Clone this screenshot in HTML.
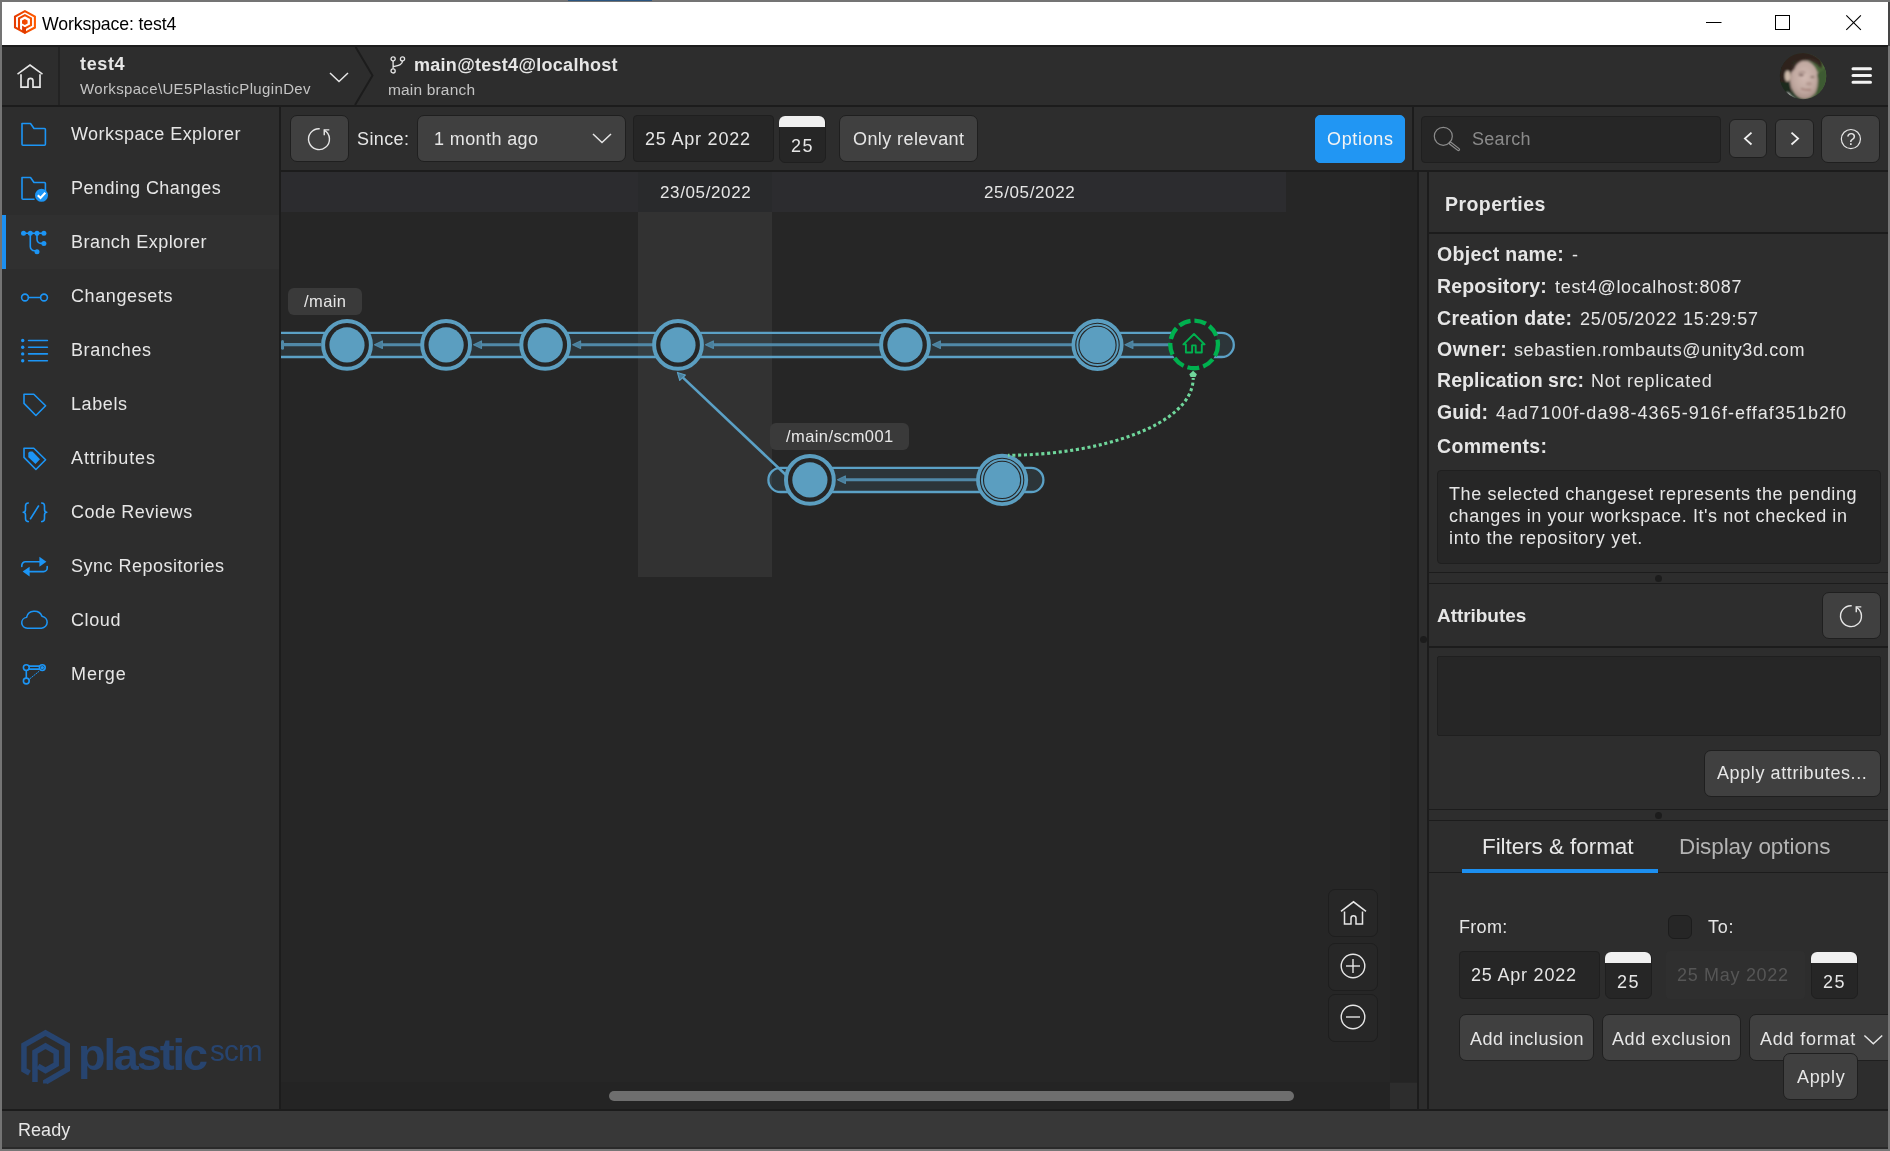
<!DOCTYPE html>
<html><head><meta charset="utf-8"><title>Workspace: test4</title>
<style>
*{box-sizing:border-box;margin:0;padding:0}
html,body{width:1890px;height:1151px;overflow:hidden;background:#777;font-family:"Liberation Sans",sans-serif;color:#e6e6e6}
.abs{position:absolute}
.txt{position:absolute;white-space:nowrap;line-height:1;will-change:transform}
#win{position:absolute;left:0;top:0;width:1890px;height:1151px;overflow:hidden}
</style></head><body>
<div id="win">
<div class="abs" style="left:0px;top:0px;width:1890px;height:1151px;background:#747474;"></div>
<div class="abs" style="left:1888px;top:0px;width:2px;height:1151px;background:#767676;"></div>
<div class="abs" style="left:2px;top:2px;width:1886px;height:1147px;background:#2d2d2d;"></div>
<div class="abs" style="left:2px;top:2px;width:1886px;height:43px;background:#ffffff;"></div>
<div class="txt" style="left:42.3px;top:16.00px;font-size:17.7px;color:#000;letter-spacing:-0.128px;">Workspace: test4</div>
<svg class="abs" style="left:1700px;top:8px;" width="170" height="30" viewBox="1700 8 170 30" fill="none"><path d="M1706 22.5h15.500" stroke="#000" stroke-width="1"/><rect x="1775.500" y="15.500" width="14" height="14" stroke="#000" stroke-width="1"/><path d="M1846.300 15.300l14.600 14.600M1860.900 15.300l-14.600 14.600" stroke="#000" stroke-width="1.100"/></svg>
<svg class="abs" style="left:10px;top:6px;" width="30" height="32" viewBox="10 6 30 32" fill="none"><defs><linearGradient id="lg" x1="14" y1="0" x2="36" y2="0" gradientUnits="userSpaceOnUse"><stop offset="0" stop-color="#e43a00"/><stop offset="1" stop-color="#ff5a00"/></linearGradient></defs>
<g stroke="url(#lg)" stroke-width="2.100" stroke-linejoin="miter" fill="none">
<path d="M24.900 11.100 L34.900 16.600 V27.500 L24.900 32.900 L15 27.500 V16.600 Z"/>
<path d="M19 29.600 V18.400 L24.900 15.100 L31 18.400 V25.100 L24.900 28.400"/></g>
<path d="M22.100 25.600 L24.900 27.200 L26 27.500 V33 L24.900 33.700 L22.100 32.100Z" fill="#e03a00"/>
<path d="M24.800 18.900 L27.600 20.450 V23.550 L24.800 25.100 L22 23.550 V20.450Z" fill="url(#lg)"/></svg>
<div class="abs" style="left:2px;top:45px;width:1886px;height:2px;background:#1c1c1c;"></div>
<div class="abs" style="left:2px;top:105px;width:1886px;height:2px;background:#1c1c1c;"></div>
<div class="abs" style="left:58px;top:47px;width:2px;height:58px;background:#232323;"></div>
<svg class="abs" style="left:15px;top:60px;" width="32" height="32" viewBox="0 0 32 32" fill="none"><path d="M2.500 14.100 L15 5.100 L27.500 14.100" stroke="#e6e6e6" stroke-width="1.600"/><path d="M6 14.300V27.200h7V20.800a2.500 2.500 0 0 1 5 0V27.200h7V14.300" stroke="#e6e6e6" stroke-width="1.700"/></svg>
<div class="txt" style="left:80px;top:55.00px;font-size:18px;color:#e6e6e6;letter-spacing:0.645px;font-weight:700;">test4</div>
<div class="txt" style="left:80px;top:81.00px;font-size:15px;color:#c4c4c4;letter-spacing:0.352px;">Workspace\UE5PlasticPluginDev</div>
<svg class="abs" style="left:327.2px;top:68.8px;" width="24" height="16" viewBox="0 0 24 16" fill="none"><path d="M3 4l9 8.500 9-8.500" stroke="#e6e6e6" stroke-width="1.500"/></svg>
<svg class="abs" style="left:352px;top:47px;" width="26" height="58" viewBox="0 0 26 58" fill="none"><path d="M3.600 0 L20.500 28.500 L3 58" stroke="#1c1c1c" stroke-width="2"/></svg>
<svg class="abs" style="left:387px;top:54px;" width="20" height="22" viewBox="0 0 20 22" fill="none"><g stroke="#e6e6e6" stroke-width="1.300"><circle cx="6.100" cy="4.900" r="2.100"/><circle cx="15.500" cy="4.900" r="2.100"/><circle cx="6.100" cy="16.900" r="2.100"/><path d="M6.100 7v7.800M15.500 7c0 3.500-3 4.300-9.400 5.600"/></g></svg>
<div class="txt" style="left:414.3px;top:56.00px;font-size:18px;color:#e6e6e6;letter-spacing:0.282px;font-weight:700;">main@test4@localhost</div>
<div class="txt" style="left:388.3px;top:82.00px;font-size:15.5px;color:#c4c4c4;letter-spacing:0.17px;">main branch</div>
<svg class="abs" style="left:1779px;top:52px" width="48" height="48" viewBox="0 0 48 48">
<defs><clipPath id="av"><circle cx="24" cy="24.100" r="23.200"/></clipPath>
<radialGradient id="face" cx="0.500" cy="0.420" r="0.600"><stop offset="0" stop-color="#d2bab2"/><stop offset="0.650" stop-color="#c0a8a0"/><stop offset="1" stop-color="#a38b82"/></radialGradient>
<linearGradient id="avbg" x1="0" y1="0" x2="1" y2="0"><stop offset="0" stop-color="#16231a"/><stop offset="0.550" stop-color="#2c4228"/><stop offset="1" stop-color="#587a40"/></linearGradient>
<filter id="bl" x="-20%" y="-20%" width="140%" height="140%"><feGaussianBlur stdDeviation="0.900"/></filter></defs>
<g clip-path="url(#av)"><rect width="48" height="48" fill="url(#avbg)"/>
<g filter="url(#bl)">
<path d="M0 26 L2 10 L13 0 L28 -1 L42 6 L43 17 L38 12 L30 7 L14 10 L12 41 L2 40Z" fill="#2e241d"/><path d="M0 30 L12 30 L11 44 L0 40Z" fill="#1b2a1d"/>
<ellipse cx="25.500" cy="28" rx="14.600" ry="19.500" fill="url(#face)"/>
<path d="M11.500 21 Q13 10 20 8 Q30 4.500 39 9 L41 14 Q34 8 25 8.500 Q18 9.500 15.500 17Z" fill="#3a2c25"/>
<ellipse cx="8.600" cy="24" rx="2.800" ry="5.600" fill="#cdb9a9"/>
<path d="M38 22 Q41 34 34 47 L48 48 L48 14Z" fill="#3d5a30"/>
<ellipse cx="22.200" cy="23.100" rx="2.800" ry="1.100" fill="#7a5f5c"/><ellipse cx="33.400" cy="24.900" rx="2.300" ry="1" fill="#8a7069"/>
<path d="M19.500 20.800 q3.500 -1.600 7 -.3" stroke="#8f7670" stroke-width="1" fill="none"/>
<ellipse cx="30" cy="31.800" rx="3" ry="1.700" fill="#b39890"/>
<path d="M22 36.600 Q27 38.300 32 37.700" stroke="#9c746c" stroke-width="1.500" fill="none"/>
<path d="M8 40 L17 47.500 L9 47Z" fill="#e4e4e4"/>
</g></g></svg>
<svg class="abs" style="left:1848px;top:62px;" width="28" height="28" viewBox="1848 62 28 28" fill="none"><path d="M1853 68.800h17.500M1853 75.600h17.500M1853 82.300h17.500" stroke="#f2f2f2" stroke-width="3" stroke-linecap="round"/></svg>
<div class="abs" style="left:279px;top:107px;width:2px;height:1004px;background:#1c1c1c;"></div>
<div class="abs" style="left:2px;top:214.5px;width:277px;height:54.0px;background:#303030;"></div>
<div class="abs" style="left:2px;top:214.5px;width:4px;height:54.0px;background:#1c8ff0;"></div>
<div class="txt" style="left:71px;top:125.00px;font-size:18px;color:#e6e6e6;letter-spacing:0.451px;">Workspace Explorer</div>
<div class="txt" style="left:71px;top:179.00px;font-size:18px;color:#e6e6e6;letter-spacing:0.478px;">Pending Changes</div>
<div class="txt" style="left:71px;top:233.00px;font-size:18px;color:#e6e6e6;letter-spacing:0.46px;">Branch Explorer</div>
<div class="txt" style="left:71px;top:287.00px;font-size:18px;color:#e6e6e6;letter-spacing:0.615px;">Changesets</div>
<div class="txt" style="left:71px;top:341.00px;font-size:18px;color:#e6e6e6;letter-spacing:0.565px;">Branches</div>
<div class="txt" style="left:71px;top:395.00px;font-size:18px;color:#e6e6e6;letter-spacing:0.592px;">Labels</div>
<div class="txt" style="left:71px;top:449.00px;font-size:18px;color:#e6e6e6;letter-spacing:0.874px;">Attributes</div>
<div class="txt" style="left:71px;top:503.00px;font-size:18px;color:#e6e6e6;letter-spacing:0.468px;">Code Reviews</div>
<div class="txt" style="left:71px;top:557.00px;font-size:18px;color:#e6e6e6;letter-spacing:0.496px;">Sync Repositories</div>
<div class="txt" style="left:71px;top:611.00px;font-size:18px;color:#e6e6e6;letter-spacing:0.617px;">Cloud</div>
<div class="txt" style="left:71px;top:665.00px;font-size:18px;color:#e6e6e6;letter-spacing:0.92px;">Merge</div>
<svg class="abs" style="left:18px;top:118px;" width="32" height="32" viewBox="0 0 32 32" fill="none"><path stroke="#1c95f5" stroke-width="1.600" fill="none" stroke-linejoin="round" stroke-linecap="round" d="M4 5.500 h8.500 l3.500 5 h10.400 a1 1 0 0 1 1 1 V26.300 a1 1 0 0 1 -1 1 H5 a1 1 0 0 1 -1 -1 Z"/></svg>
<svg class="abs" style="left:18px;top:172px;" width="32" height="32" viewBox="0 0 32 32" fill="none"><path stroke="#1c95f5" stroke-width="1.600" fill="none" stroke-linejoin="round" stroke-linecap="round" d="M4 5.500 h8.500 l3.500 5 h10.400 a1 1 0 0 1 1 1 V19.500 M16 27.300 H5 a1 1 0 0 1 -1 -1 V5.500"/><circle cx="23.500" cy="23.300" r="6.500" fill="#1c95f5"/><path d="M19.800 23.300l2.700 2.700 4.800-5.200" stroke="#fff" stroke-width="2.100" fill="none"/></svg>
<svg class="abs" style="left:18px;top:226px;" width="32" height="32" viewBox="0 0 32 32" fill="none"><g stroke="#1c95f5" stroke-width="1.600" fill="none" stroke-linejoin="round" stroke-linecap="round" stroke-width="1.600"><path d="M5.500 7.300h20.400M12.300 7.300v13.200a4.200 4.200 0 0 0 4.200 4.300h2.500M19 7.300v6a4 4 0 0 0 4 4.100h2.900"/></g><g fill="#1c95f5"><circle cx="5.500" cy="7.300" r="2.500"/><circle cx="12.300" cy="7.300" r="2.500"/><circle cx="19" cy="7.300" r="2.500"/><circle cx="25.900" cy="7.300" r="2.500"/><circle cx="25.900" cy="17.400" r="2.500"/><circle cx="19" cy="25.800" r="2.500"/></g></svg>
<svg class="abs" style="left:18px;top:280px;" width="32" height="32" viewBox="0 0 32 32" fill="none"><g stroke="#1c95f5" stroke-width="1.600" fill="none" stroke-linejoin="round" stroke-linecap="round" stroke-width="1.900"><circle cx="7" cy="17.500" r="3.400"/><circle cx="26" cy="17.500" r="3.400"/><path d="M10.400 17.500h12.200"/></g></svg>
<svg class="abs" style="left:18px;top:334px;" width="32" height="32" viewBox="0 0 32 32" fill="none"><g stroke="#1c95f5" stroke-width="1.600" fill="none" stroke-linejoin="round" stroke-linecap="round" stroke-width="1.600"><path d="M10.600 6.500h18.800M10.600 13.300h18.800M10.600 19.900h18.800M10.600 26.700h18.800"/></g><g fill="#1c95f5"><circle cx="4.700" cy="6.500" r="1.700"/><circle cx="4.700" cy="13.300" r="1.700"/><circle cx="4.700" cy="19.900" r="1.700"/><circle cx="4.700" cy="26.700" r="1.700"/></g></svg>
<svg class="abs" style="left:18px;top:388px;" width="32" height="32" viewBox="0 0 32 32" fill="none"><path stroke="#1c95f5" stroke-width="1.600" fill="none" stroke-linejoin="round" stroke-linecap="round" stroke-width="1.900" d="M6 6.200 H15.800 L27.600 17.700 L17.900 27.500 L6 15.400 Z"/></svg>
<svg class="abs" style="left:18px;top:442px;" width="32" height="32" viewBox="0 0 32 32" fill="none"><path stroke="#1c95f5" stroke-width="1.600" fill="none" stroke-linejoin="round" stroke-linecap="round" stroke-width="1.900" d="M6 6.200 H15.800 L27.600 17.700 L17.900 27.500 L6 15.400 Z"/><path d="M10.300 11.500 a2 2 0 0 1 2-2 h2.200 L22 17.300 L17.500 22 L10.300 15.300Z" fill="#1c95f5"/></svg>
<svg class="abs" style="left:18px;top:496px;" width="32" height="32" viewBox="0 0 32 32" fill="none"><g stroke="#1c95f5" stroke-width="1.600" fill="none" stroke-linejoin="round" stroke-linecap="round" stroke-width="1.500"><path d="M10.300 7c-2.300 0-2.800 1.200-2.800 3v3.600c0 1.800-.9 2.700-2.300 2.700 1.400 0 2.300.9 2.300 2.700v3.600c0 1.800.5 3 2.800 3"/><path d="M23.700 7c2.300 0 2.800 1.200 2.800 3v3.600c0 1.800.9 2.700 2.300 2.700-1.400 0-2.300.9-2.300 2.700v3.600c0 1.800-.5 3-2.800 3"/><path d="M20.500 10l-8 12.700"/></g></svg>
<svg class="abs" style="left:18px;top:550px;" width="32" height="32" viewBox="0 0 32 32" fill="none"><g stroke="#1c95f5" stroke-width="1.600" fill="none" stroke-linejoin="round" stroke-linecap="round" stroke-width="1.700"><path d="M3.800 16.400v-1a3.600 3.600 0 0 1 3.600-3.600h14.500"/><path d="M29.200 16.600v1.400a3.600 3.600 0 0 1-3.600 3.600H11.500"/></g><path d="M21.400 6.800l7 5-7 5z" fill="#1c95f5"/><path d="M11.600 16.800l-7 4.800 7 4.800z" fill="#1c95f5"/></svg>
<svg class="abs" style="left:18px;top:604px;" width="32" height="32" viewBox="0 0 32 32" fill="none"><path stroke="#1c95f5" stroke-width="1.600" fill="none" stroke-linejoin="round" stroke-linecap="round" transform="matrix(0.975 0 0 0.914 0.080 0.930)" d="M9.500 25.500a6 6 0 0 1-.8-11.900 8.200 8.200 0 0 1 15.800-1.300 6.700 6.700 0 0 1-.5 13.200z"/></svg>
<svg class="abs" style="left:18px;top:658px;" width="32" height="32" viewBox="0 0 32 32" fill="none"><g stroke="#1c95f5" stroke-width="1.600" fill="none" stroke-linejoin="round" stroke-linecap="round" stroke-width="1.300"><circle cx="8.300" cy="9.600" r="2.900"/><circle cx="8.300" cy="23" r="2.900"/><circle cx="24.300" cy="9.600" r="2.900"/><circle cx="24.300" cy="9.600" r="0.900"/><path d="M11.200 8.100h10.200M11.200 11.100h10.200M8.300 12.500v7.600"/><path d="M11.800 20.800l9-7.300" stroke-width="1" stroke-dasharray="1.200 1.400"/></g></svg>
<svg class="abs" style="left:16px;top:1024px;" width="60" height="68" viewBox="16 1024 60 68" fill="none"><g stroke="#27446f" stroke-width="5.500" stroke-linejoin="miter" fill="none"><path d="M45.800 1083.500 V1081.900 L67.250 1069.500 V1045 L45.500 1032.800 L23.950 1045 V1070 L29.500 1073.200"/><path d="M34.950 1082 V1052 L45.500 1045.900 L56.200 1052 V1064.400 L45.500 1070.500 L38 1066.200"/></g></svg>
<div class="txt" style="left:78px;top:1032.00px;font-size:45px;color:#27446f;letter-spacing:-2.093px;font-weight:700;">plastic</div>
<div class="txt" style="left:209.5px;top:1036.00px;font-size:29.5px;color:#27446f;letter-spacing:-0.787px;">scm</div>
<div class="abs" style="left:281px;top:170px;width:1607px;height:2px;background:#1c1c1c;"></div>
<div class="abs" style="left:289.5px;top:115.3px;width:59.0px;height:47.2px;background:#404040;border:1px solid #1f1f1f;border-radius:7px;"></div>
<svg class="abs" style="left:300px;top:121px;" width="38" height="36" viewBox="300 121 38 36" fill="none"><g stroke="#e6e6e6" stroke-width="1.400" fill="none"><path d="M319.70 128.72 A10.450 10.450 0 1 0 324.20 130.08"/><path d="M329.30 129.85 H324.25 V135.35" stroke-linejoin="miter"/></g></svg>
<div class="txt" style="left:356.5px;top:130.00px;font-size:18px;color:#e6e6e6;letter-spacing:0.394px;">Since:</div>
<div class="abs" style="left:416.5px;top:115.2px;width:209.0px;height:47.3px;background:#404040;border:1px solid #1f1f1f;border-radius:7px;"></div>
<div class="txt" style="left:434.3px;top:130.00px;font-size:18px;color:#e6e6e6;letter-spacing:0.393px;">1 month ago</div>
<svg class="abs" style="left:590px;top:130px;" width="24" height="16" viewBox="0 0 24 16" fill="none"><path d="M3 4l9 8.500 9-8.500" stroke="#e6e6e6" stroke-width="1.500"/></svg>
<div class="abs" style="left:632.5px;top:115.2px;width:141.0px;height:47.3px;background:#262626;border:1px solid #1f1f1f;border-radius:4px;"></div>
<div class="txt" style="left:644.7px;top:130.00px;font-size:18px;color:#e6e6e6;letter-spacing:0.792px;">25 Apr 2022</div>
<div class="abs" style="left:778.5px;top:115.5px;width:47.0px;height:47.0px;background:#262626;border:1px solid #1f1f1f;border-radius:6px;"></div>
<div class="abs" style="left:779.2px;top:115.8px;width:45.59999999999991px;height:11.400000000000006px;background:#f0f0f0;border-radius:6px 6px 0 0;"></div>
<div class="txt" style="left:791.45px;top:137.00px;font-size:18px;color:#e6e6e6;letter-spacing:1.478px;">25</div>
<div class="abs" style="left:838.5px;top:115.2px;width:139.0px;height:47.3px;background:#404040;border:1px solid #1f1f1f;border-radius:7px;"></div>
<div class="txt" style="left:852.8px;top:130.00px;font-size:18px;color:#e6e6e6;letter-spacing:0.413px;">Only relevant</div>
<div class="abs" style="left:1315px;top:115px;width:90px;height:48px;background:#2196f3;border:1px solid #2196f3;border-radius:5px;"></div>
<div class="txt" style="left:1327.0px;top:130.00px;font-size:18px;color:#f4f4f4;letter-spacing:0.661px;">Options</div>
<div class="abs" style="left:1412px;top:107px;width:2px;height:63px;background:#1c1c1c;"></div>
<div class="abs" style="left:1421px;top:115.5px;width:300.29999999999995px;height:47.099999999999994px;background:#262626;border:1px solid #1f1f1f;border-radius:4px;"></div>
<svg class="abs" style="left:1430px;top:122px;" width="34" height="34" viewBox="1430 122 34 34" fill="none"><circle cx="1443.300" cy="136.300" r="9" stroke="#8c8c8c" stroke-width="1.200"/><path d="M1450.200 143.100 L1458.400 149.500" stroke="#8c8c8c" stroke-width="3.400" stroke-linecap="round"/><path d="M1450.600 143.400 L1458.300 149.400" stroke="#262626" stroke-width="1.100" stroke-linecap="round"/></svg>
<div class="txt" style="left:1471.9px;top:130.00px;font-size:18px;color:#8a8a8a;letter-spacing:0.293px;">Search</div>
<div class="abs" style="left:1729.3px;top:119px;width:38.0px;height:38.69999999999999px;background:#404040;border:1px solid #1f1f1f;border-radius:6px;"></div>
<svg class="abs" style="left:1738px;top:128px;" width="20" height="22" viewBox="1738 128 20 22" fill="none"><path d="M1751.500 132.700 L1744.900 138.600 L1751.500 144.500" stroke="#f0f0f0" stroke-width="1.800"/></svg>
<div class="abs" style="left:1775px;top:119px;width:38.5px;height:38.69999999999999px;background:#404040;border:1px solid #1f1f1f;border-radius:6px;"></div>
<svg class="abs" style="left:1785px;top:128px;" width="20" height="22" viewBox="1785 128 20 22" fill="none"><path d="M1791.500 132.700 L1798.100 138.600 L1791.500 144.500" stroke="#f0f0f0" stroke-width="1.800"/></svg>
<div class="abs" style="left:1821px;top:115.2px;width:59.200000000000045px;height:47.39999999999999px;background:#404040;border:1px solid #1f1f1f;border-radius:7px;"></div>
<svg class="abs" style="left:1838px;top:126px;" width="26" height="26" viewBox="1838 126 26 26" fill="none"><circle cx="1850.900" cy="139.050" r="9.550" stroke="#e6e6e6" stroke-width="1.200"/></svg>
<div class="txt" style="left:1651.2px;width:400px;text-align:center;top:131.00px;font-size:16.5px;color:#e6e6e6;letter-spacing:0px;">?</div>
<div class="abs" style="left:281px;top:172px;width:1137px;height:937px;background:#262626;"></div>
<div class="abs" style="left:281px;top:172px;width:1004.5px;height:40px;background:#2c2c2f;"></div>
<div class="abs" style="left:638px;top:172px;width:134px;height:40px;background:#292a2c;"></div>
<div class="abs" style="left:638px;top:212px;width:134px;height:364.5px;background:#323232;"></div>
<div class="txt" style="left:659.85px;top:184.00px;font-size:17px;color:#e6e6e6;letter-spacing:0.624px;">23/05/2022</div>
<div class="txt" style="left:983.85px;top:184.00px;font-size:17px;color:#e6e6e6;letter-spacing:0.624px;">25/05/2022</div>
<div class="abs" style="left:1390px;top:172px;width:28px;height:910px;background:#242424;"></div>
<div class="abs" style="left:281px;top:1082px;width:1109px;height:27px;background:#242424;"></div>
<div class="abs" style="left:1390px;top:1082.5px;width:28px;height:26.5px;background:#2d2d2d;"></div>
<div class="abs" style="left:609px;top:1091px;width:685px;height:10px;background:#6e6e6e;border-radius:5px;"></div>
<div class="abs" style="left:1417px;top:172px;width:2px;height:937px;background:#1c1c1c;"></div>
<div class="abs" style="left:1419px;top:172px;width:8px;height:937px;background:#2d2d2d;"></div>
<div class="abs" style="left:1427px;top:172px;width:2px;height:937px;background:#1c1c1c;"></div>
<div class="abs" style="left:1419.500px;top:635.500px;width:7px;height:7px;border-radius:3.500px;background:#1c1c1c"></div>
<svg class="abs" style="left:0px;top:0px;pointer-events:none;" width="1420" height="1108" viewBox="0 0 1420 1108" fill="none"><path d="M281 332.79999999999995 H1221.700 a12.1 12.1 0 0 1 0 24.2 H281" fill="rgba(91,161,198,0.12)" stroke="#5ba1c6" stroke-width="2.300"/><path d="M281 344.59999999999997H321" stroke="#5089a8" stroke-width="3.100"/><path d="M282.500 341.5v6.800" stroke="#5089a8" stroke-width="3" stroke-linecap="round"/><path d="M422.1 344.7H380.9" stroke="#5089a8" stroke-width="2.900"/><path d="M374.50 344.7l7.900 -3.800v7.600z" fill="#4a7f9b" stroke="#5089a8" stroke-width="1.100" stroke-linejoin="round"/><path d="M521.2 344.7H480.0" stroke="#5089a8" stroke-width="2.900"/><path d="M473.60 344.7l7.900 -3.800v7.600z" fill="#4a7f9b" stroke="#5089a8" stroke-width="1.100" stroke-linejoin="round"/><path d="M654 344.7H579.1" stroke="#5089a8" stroke-width="2.900"/><path d="M572.70 344.7l7.900 -3.800v7.600z" fill="#4a7f9b" stroke="#5089a8" stroke-width="1.100" stroke-linejoin="round"/><path d="M881 344.7H711.9" stroke="#5089a8" stroke-width="2.900"/><path d="M705.50 344.7l7.900 -3.800v7.600z" fill="#4a7f9b" stroke="#5089a8" stroke-width="1.100" stroke-linejoin="round"/><path d="M1073.5 344.7H938.9" stroke="#5089a8" stroke-width="2.900"/><path d="M932.50 344.7l7.900 -3.800v7.600z" fill="#4a7f9b" stroke="#5089a8" stroke-width="1.100" stroke-linejoin="round"/><path d="M1170 344.7H1131.4" stroke="#5089a8" stroke-width="2.900"/><path d="M1125.00 344.7l7.900 -3.800v7.600z" fill="#4a7f9b" stroke="#5089a8" stroke-width="1.100" stroke-linejoin="round"/><path d="M780.500 467.79999999999995 H1031.300 a12.1 12.1 0 0 1 0 24.2 H780.500 a12.1 12.1 0 0 1 0 -24.2Z" fill="rgba(91,161,198,0.12)" stroke="#5ba1c6" stroke-width="2.300"/><path d="M980 479.7H843.9" stroke="#5089a8" stroke-width="2.900"/><path d="M837.50 479.7l7.900 -3.800v7.600z" fill="#4a7f9b" stroke="#5089a8" stroke-width="1.100" stroke-linejoin="round"/><path d="M790 478.800 L683 377.600" stroke="#5ba1c6" stroke-width="2.600"/><path d="M677.400 372.400 L685.400 375 L679.700 380.400Z" fill="#4a7f9b" stroke="#5ba1c6" stroke-width="1.100" stroke-linejoin="round"/><circle cx="347" cy="344.9" r="23.900" fill="#262626" stroke="#5b9ec0" stroke-width="4"/><circle cx="347" cy="344.9" r="17.600" fill="#5b9ec0"/><circle cx="446.1" cy="344.9" r="23.900" fill="#262626" stroke="#5b9ec0" stroke-width="4"/><circle cx="446.1" cy="344.9" r="17.600" fill="#5b9ec0"/><circle cx="545.2" cy="344.9" r="23.900" fill="#262626" stroke="#5b9ec0" stroke-width="4"/><circle cx="545.2" cy="344.9" r="17.600" fill="#5b9ec0"/><circle cx="678" cy="344.9" r="23.900" fill="#262626" stroke="#5b9ec0" stroke-width="4"/><circle cx="678" cy="344.9" r="17.600" fill="#5b9ec0"/><circle cx="905" cy="344.9" r="23.900" fill="#262626" stroke="#5b9ec0" stroke-width="4"/><circle cx="905" cy="344.9" r="17.600" fill="#5b9ec0"/><circle cx="1097.5" cy="344.9" r="26.050" fill="#5b9ec0"/><circle cx="1097.5" cy="344.9" r="21.700" fill="none" stroke="#262626" stroke-width="1.100"/><circle cx="1097.5" cy="344.9" r="18.600" fill="none" stroke="#262626" stroke-width="1.100"/><circle cx="809.9" cy="479.9" r="23.900" fill="#262626" stroke="#5b9ec0" stroke-width="4"/><circle cx="809.9" cy="479.9" r="17.600" fill="#5b9ec0"/><circle cx="1002.1" cy="479.9" r="26.050" fill="#5b9ec0"/><circle cx="1002.1" cy="479.9" r="21.700" fill="none" stroke="#262626" stroke-width="1.100"/><circle cx="1002.1" cy="479.9" r="18.600" fill="none" stroke="#262626" stroke-width="1.100"/><circle cx="1194.100" cy="344.400" r="23.850" fill="#262626" stroke="#00b14f" stroke-width="4.300" stroke-dasharray="12 4"/><g stroke="#00b14f" stroke-width="1.900" fill="none" stroke-linejoin="round"><path d="M1183.400 344.400 L1194 334 L1204.600 344.400 H1201.800 V352.500 H1195.700 V345.400 H1192.100 V352.500 H1185.900 V344.400 Z"/></g><path d="M1008 455.300 C1099.300 455 1193.300 425.200 1193.200 378" stroke="#6fd69b" stroke-width="3.100" stroke-dasharray="3.100 2.700" stroke-dashoffset="1.500" fill="none"/><path d="M1193.100 370.700 l3.800 3.600 -1.300 2.700 h-5 l-1.300 -2.700z" fill="#6fd69b"/></svg>
<div class="abs" style="left:288px;top:287.6px;width:74.30000000000001px;height:27.399999999999977px;background:#3a3a3a;border-radius:6px;"></div>
<div class="txt" style="left:304.2px;top:293.00px;font-size:16.5px;color:#e6e6e6;letter-spacing:0.413px;">/main</div>
<div class="abs" style="left:769.6px;top:422.6px;width:139.29999999999995px;height:27.399999999999977px;background:#3a3a3a;border-radius:6px;"></div>
<div class="txt" style="left:785.7px;top:428.00px;font-size:16.5px;color:#e6e6e6;letter-spacing:0.408px;">/main/scm001</div>
<div class="abs" style="left:1328px;top:889px;width:50.40000000000009px;height:48px;background:#272727;border:1px solid #1e1e1e;border-radius:7px;"></div>
<svg class="abs" style="left:1338px;top:897.3px;" width="32" height="32" viewBox="0 0 32 32" fill="none"><path d="M3 14.300 L15.500 4.800 L28 14.300" stroke="#e6e6e6" stroke-width="1.500"/><path d="M6.500 14.400V27h6.500v-5.800a2.500 2.500 0 0 1 5 0V27h6.500V14.400" stroke="#e6e6e6" stroke-width="1.500"/></svg>
<div class="abs" style="left:1328px;top:943px;width:50.40000000000009px;height:48px;background:#272727;border:1px solid #1e1e1e;border-radius:7px;"></div>
<svg class="abs" style="left:1338.6px;top:952.4px;" width="28" height="28" viewBox="0 0 28 28" fill="none"><circle cx="14" cy="14" r="11.800" stroke="#e6e6e6" stroke-width="1.400"/><path d="M7 14h14" stroke="#e6e6e6" stroke-width="1.400"/><path d="M14 7v14" stroke="#e6e6e6" stroke-width="1.400"/></svg>
<div class="abs" style="left:1328px;top:994px;width:50.40000000000009px;height:48px;background:#272727;border:1px solid #1e1e1e;border-radius:7px;"></div>
<svg class="abs" style="left:1338.6px;top:1003.1px;" width="28" height="28" viewBox="0 0 28 28" fill="none"><circle cx="14" cy="14" r="11.800" stroke="#e6e6e6" stroke-width="1.400"/><path d="M7 14h14" stroke="#e6e6e6" stroke-width="1.400"/></svg>
<div class="abs" style="left:1429px;top:172px;width:459px;height:937px;background:#2d2d2d;"></div>
<div class="txt" style="left:1445.3px;top:195.00px;font-size:19.5px;color:#e6e6e6;letter-spacing:0.427px;font-weight:700;">Properties</div>
<div class="abs" style="left:1429px;top:232px;width:459px;height:2px;background:#1c1c1c;"></div>
<div class="txt" style="left:1437.3px;top:245.00px;font-size:19.5px;color:#e6e6e6;letter-spacing:0.298px;font-weight:700;">Object name:</div>
<div class="txt" style="left:1571.8px;top:246.00px;font-size:18px;color:#e6e6e6;letter-spacing:1.306px;">-</div>
<div class="txt" style="left:1437.3px;top:277.00px;font-size:19.5px;color:#e6e6e6;letter-spacing:0.129px;font-weight:700;">Repository:</div>
<div class="txt" style="left:1555px;top:278.00px;font-size:18px;color:#e6e6e6;letter-spacing:0.69px;">test4@localhost:8087</div>
<div class="txt" style="left:1437.3px;top:309.00px;font-size:19.5px;color:#e6e6e6;letter-spacing:0.302px;font-weight:700;">Creation date:</div>
<div class="txt" style="left:1579.6px;top:310.00px;font-size:18px;color:#e6e6e6;letter-spacing:0.714px;">25/05/2022 15:29:57</div>
<div class="txt" style="left:1437.3px;top:340.00px;font-size:19.5px;color:#e6e6e6;letter-spacing:0.501px;font-weight:700;">Owner:</div>
<div class="txt" style="left:1513.5px;top:341.00px;font-size:18px;color:#e6e6e6;letter-spacing:0.62px;">sebastien.rombauts@unity3d.com</div>
<div class="txt" style="left:1437.3px;top:371.00px;font-size:19.5px;color:#e6e6e6;letter-spacing:0.046px;font-weight:700;">Replication src:</div>
<div class="txt" style="left:1590.8px;top:372.00px;font-size:18px;color:#e6e6e6;letter-spacing:0.749px;">Not replicated</div>
<div class="txt" style="left:1437.3px;top:403.00px;font-size:19.5px;color:#e6e6e6;letter-spacing:0.027px;font-weight:700;">Guid:</div>
<div class="txt" style="left:1495.6px;top:404.00px;font-size:18px;color:#e6e6e6;letter-spacing:1.033px;">4ad7100f-da98-4365-916f-effaf351b2f0</div>
<div class="txt" style="left:1437.3px;top:437.00px;font-size:19.5px;color:#e6e6e6;letter-spacing:0.344px;font-weight:700;">Comments:</div>
<div class="abs" style="left:1437px;top:470px;width:444px;height:94px;background:#262626;border:1px solid #1f1f1f;border-radius:4px;"></div>
<div class="txt" style="left:1449.3px;top:485.00px;font-size:18px;color:#e6e6e6;letter-spacing:0.621px;">The selected changeset represents the pending</div>
<div class="txt" style="left:1449.3px;top:507.00px;font-size:18px;color:#e6e6e6;letter-spacing:0.584px;">changes in your workspace. It's not checked in</div>
<div class="txt" style="left:1449.3px;top:529.00px;font-size:18px;color:#e6e6e6;letter-spacing:0.705px;">into the repository yet.</div>
<div class="abs" style="left:1429px;top:572px;width:459px;height:1px;background:#1c1c1c;"></div>
<div class="abs" style="left:1429px;top:583px;width:459px;height:1px;background:#1c1c1c;"></div>
<div class="abs" style="left:1655px;top:574.800px;width:7px;height:7px;border-radius:3.500px;background:#1c1c1c"></div>
<div class="txt" style="left:1436.8px;top:606.00px;font-size:19px;color:#e6e6e6;letter-spacing:-0.047px;font-weight:700;">Attributes</div>
<div class="abs" style="left:1821.5px;top:592.3px;width:59.0px;height:47.200000000000045px;background:#404040;border:1px solid #1f1f1f;border-radius:7px;"></div>
<svg class="abs" style="left:1832px;top:598px;" width="38" height="36" viewBox="1832 598 38 36" fill="none"><g stroke="#e6e6e6" stroke-width="1.400" fill="none"><path d="M1851.70 605.72 A10.450 10.450 0 1 0 1856.20 607.08"/><path d="M1861.30 606.85 H1856.25 V612.35" stroke-linejoin="miter"/></g></svg>
<div class="abs" style="left:1429px;top:646px;width:459px;height:2px;background:#1c1c1c;"></div>
<div class="abs" style="left:1437px;top:656px;width:444px;height:80px;background:#262626;border:1px solid #1f1f1f;border-radius:2px;"></div>
<div class="abs" style="left:1703.5px;top:749.5px;width:177.0px;height:47.0px;background:#404040;border:1px solid #1f1f1f;border-radius:7px;"></div>
<div class="txt" style="left:1717.1px;top:764.00px;font-size:18px;color:#e6e6e6;letter-spacing:0.596px;">Apply attributes...</div>
<div class="abs" style="left:1429px;top:809px;width:459px;height:1px;background:#1c1c1c;"></div>
<div class="abs" style="left:1429px;top:820px;width:459px;height:1px;background:#1c1c1c;"></div>
<div class="abs" style="left:1655px;top:812px;width:7px;height:7px;border-radius:3.500px;background:#1c1c1c"></div>
<div class="txt" style="left:1482.3px;top:836.00px;font-size:22.5px;color:#e6e6e6;letter-spacing:-0.068px;">Filters &amp; format</div>
<div class="txt" style="left:1678.5px;top:836.00px;font-size:22.5px;color:#b4b4b4;letter-spacing:-0.077px;">Display options</div>
<div class="abs" style="left:1429px;top:872px;width:459px;height:1px;background:#1c1c1c;"></div>
<div class="abs" style="left:1462px;top:869.3px;width:196px;height:3.7000000000000455px;background:#1c8ff0;"></div>
<div class="txt" style="left:1459.2px;top:918.00px;font-size:18px;color:#e6e6e6;letter-spacing:0.301px;">From:</div>
<div class="abs" style="left:1668px;top:915px;width:24px;height:24px;background:#262626;border:1px solid #1c1c1c;border-radius:6px;"></div>
<div class="txt" style="left:1707.5px;top:918.00px;font-size:18px;color:#e6e6e6;letter-spacing:0.744px;">To:</div>
<div class="abs" style="left:1459px;top:951px;width:141px;height:47.5px;background:#262626;border:1px solid #1f1f1f;border-radius:4px;"></div>
<div class="txt" style="left:1471.4px;top:966.00px;font-size:18px;color:#e6e6e6;letter-spacing:0.792px;">25 Apr 2022</div>
<div class="abs" style="left:1604.5px;top:951.5px;width:47.0px;height:47.0px;background:#262626;border:1px solid #1f1f1f;border-radius:6px;"></div>
<div class="abs" style="left:1605.2px;top:951.8px;width:45.59999999999991px;height:11.400000000000091px;background:#f0f0f0;border-radius:6px 6px 0 0;"></div>
<div class="txt" style="left:1617.45px;top:973.00px;font-size:18px;color:#e6e6e6;letter-spacing:1.478px;">25</div>
<div class="abs" style="left:1666px;top:951px;width:139px;height:47.5px;background:#2f2f2f;border-radius:4px;"></div>
<div class="txt" style="left:1676.8px;top:966.00px;font-size:18px;color:#565656;letter-spacing:0.693px;">25 May 2022</div>
<div class="abs" style="left:1810.5px;top:951.5px;width:47.0px;height:47.0px;background:#262626;border:1px solid #1f1f1f;border-radius:6px;"></div>
<div class="abs" style="left:1811.2px;top:951.8px;width:45.59999999999991px;height:11.400000000000091px;background:#f0f0f0;border-radius:6px 6px 0 0;"></div>
<div class="txt" style="left:1823.45px;top:973.00px;font-size:18px;color:#e6e6e6;letter-spacing:1.478px;">25</div>
<div class="abs" style="left:1459.2px;top:1014.2px;width:134.5999999999999px;height:47.200000000000045px;background:#404040;border:1px solid #1f1f1f;border-radius:7px;"></div>
<div class="txt" style="left:1470.2px;top:1030.00px;font-size:18px;color:#e6e6e6;letter-spacing:0.544px;">Add inclusion</div>
<div class="abs" style="left:1601.5px;top:1014.2px;width:139.0px;height:47.200000000000045px;background:#404040;border:1px solid #1f1f1f;border-radius:7px;"></div>
<div class="txt" style="left:1612px;top:1030.00px;font-size:18px;color:#e6e6e6;letter-spacing:0.561px;">Add exclusion</div>
<div class="abs" style="left:1749.2px;top:1014.2px;width:150.79999999999995px;height:47.200000000000045px;background:#404040;border:1px solid #1f1f1f;border-radius:7px;"></div>
<div class="txt" style="left:1760.3px;top:1030.00px;font-size:18px;color:#e6e6e6;letter-spacing:0.795px;">Add format</div>
<svg class="abs" style="left:1860px;top:1030px;" width="28" height="20" viewBox="1860 1030 28 20" fill="none"><path d="M1864.400 1035.500l8.900 8.300 8.900-8.300" stroke="#e6e6e6" stroke-width="1.500"/></svg>
<div class="abs" style="left:1783.3px;top:1053.3px;width:74.5px;height:46.90000000000009px;background:#404040;border:1px solid #1f1f1f;border-radius:7px;"></div>
<div class="txt" style="left:1797px;top:1068.00px;font-size:18px;color:#e6e6e6;letter-spacing:0.668px;">Apply</div>
<div class="abs" style="left:2px;top:1109px;width:1886px;height:2px;background:#1c1c1c;"></div>
<div class="abs" style="left:2px;top:1111px;width:1886px;height:36px;background:#383838;"></div>
<div class="abs" style="left:2px;top:1147px;width:1886px;height:2px;background:#2a2a2a;"></div>
<div class="txt" style="left:18.3px;top:1121.00px;font-size:18px;color:#e6e6e6;letter-spacing:0.042px;">Ready</div>
<div class="abs" style="left:1888px;top:0px;width:2px;height:1151px;background:#767676;"></div>
<div class="abs" style="left:0px;top:1149px;width:1890px;height:2px;background:#767676;"></div>
<div class="abs" style="left:1888px;top:2px;width:2px;height:44px;background:#454545;"></div>
<div class="abs" style="left:568px;top:0px;width:84px;height:1px;background:#2a5580;"></div>
</div>
</body></html>
